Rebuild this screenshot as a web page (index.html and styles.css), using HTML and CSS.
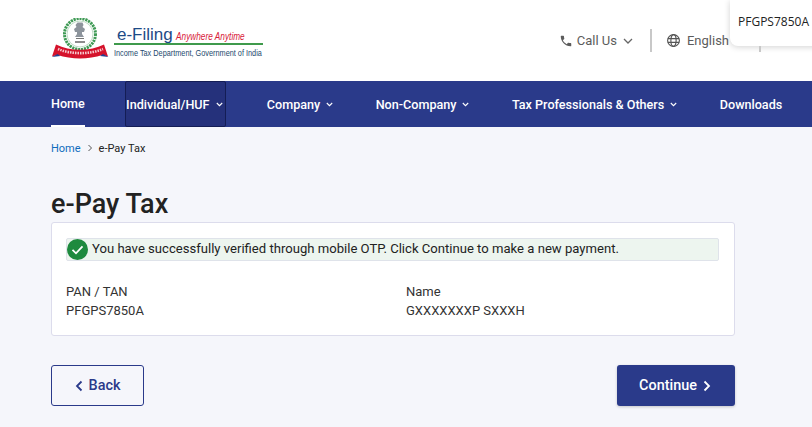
FILE: index.html
```html
<!DOCTYPE html>
<html lang="en">
<head>
  <meta charset="UTF-8">
  <title>e-Pay Tax</title>
  <link rel="stylesheet" href="styles.css">
</head>
<body>

  <!-- HEADER -->
  <header class="header">
    <div class="logo">
      <svg class="logo__emblem" width="60" height="42" viewBox="0 0 60 42">
        <circle cx="29" cy="16" r="15.500" fill="none" stroke="#3f9a55" stroke-width="3" stroke-dasharray="2.200 .8"/>
        <circle cx="29" cy="16" r="13" fill="none" stroke="#bfdcc6" stroke-width="1"/>
        <path d="M26.500 4.500h5l1 2.500-1 2 2.500 2-1 3h-2v2l2 3h-9l2-3v-2h-2l-1-3 2.500-2-1-2z" fill="#8d949c"/>
        <path d="M24 24h10" stroke="#666" stroke-width="1.500"/>
        <path d="M25 20.500h8" stroke="#777" stroke-width="1"/>
        <path d="M5 26.500c14 7 34 7 48 0l4 12-5.500-1.500c-14 4.500-31 4.500-45 0L1 38.500z" fill="#d5122b"/>
        <path d="M7 31c13 5.500 32 5.500 45 0" fill="none" stroke="#f6c9cf" stroke-width="2.600" stroke-dasharray="1.500 1"/>
        <path d="M1 39l5.500-3 3 2zM57.500 39l-5.500-3-3 2z" fill="#23408f"/>
      </svg>
      <div class="logo__text">
        <div class="logo__top"><span class="logo__name">e-Filing</span><span class="logo__tag">Anywhere Anytime</span></div>
        <div class="logo__dept"><span class="logo__dept-text">Income Tax Department, Government of India</span></div>
      </div>
    </div>
    <div class="tools">
      <svg width="14" height="14" viewBox="0 0 24 24"><path d="M6.600 10.800c1.400 2.800 3.800 5.100 6.600 6.600l2.200-2.200c.3-.3.7-.4 1-.2 1.100.4 2.300.6 3.600.6.600 0 1 .4 1 1V20c0 .6-.4 1-1 1C10.600 21 3 13.400 3 4c0-.6.4-1 1-1h3.500c.6 0 1 .4 1 1 0 1.300.2 2.500.6 3.600.1.300 0 .7-.2 1z" fill="#5c5c5c"/></svg>
      <span class="tools__label tools__label--call">Call Us</span>
      <svg class="tools__chev" width="10" height="6" viewBox="0 0 10 6"><path d="M1 1l4 4 4-4" fill="none" stroke="#666" stroke-width="1.300"/></svg>
      <span class="tools__sep"></span>
      <svg width="15" height="15" viewBox="0 0 16 16" fill="none" stroke="#555" stroke-width="1.200"><circle cx="8" cy="8" r="6.300"/><ellipse cx="8" cy="8" rx="2.800" ry="6.300"/><path d="M2 6h12M2 10h12"/></svg>
      <span class="tools__label">English</span>
    </div>
    <div class="pan-pop">PFGPS7850A</div>
    <span class="pan-tick"></span>
  </header>

  <!-- MENU -->
  <nav class="nav">
    <a class="nav__item nav__item--active">Home</a>
    <a class="nav__item nav__item--focus">Individual/HUF<svg class="nav__chev" width="7" height="5" viewBox="0 0 7 5"><path d="M.8 1l2.700 2.700L6.200 1" fill="none" stroke="#fff" stroke-width="1.100"/></svg></a>
    <a class="nav__item">Company<svg class="nav__chev" width="7" height="5" viewBox="0 0 7 5"><path d="M.8 1l2.700 2.700L6.200 1" fill="none" stroke="#fff" stroke-width="1.100"/></svg></a>
    <a class="nav__item">Non-Company<svg class="nav__chev" width="7" height="5" viewBox="0 0 7 5"><path d="M.8 1l2.700 2.700L6.200 1" fill="none" stroke="#fff" stroke-width="1.100"/></svg></a>
    <a class="nav__item">Tax Professionals &amp; Others<svg class="nav__chev" width="7" height="5" viewBox="0 0 7 5"><path d="M.8 1l2.700 2.700L6.200 1" fill="none" stroke="#fff" stroke-width="1.100"/></svg></a>
    <a class="nav__item">Downloads</a>
  </nav>

  <!-- CONTENU -->
  <main class="main">
    <div class="crumbs">
      <a class="crumbs__link">Home</a>
      <svg width="6" height="8" viewBox="0 0 6 8"><path d="M1.500 1l3 3-3 3" fill="none" stroke="#555" stroke-width="1"/></svg>
      <span>e-Pay Tax</span>
    </div>

    <h1 class="title">e-Pay Tax</h1>

    <section class="card">
      <div class="alert">
        <svg class="alert__icon" width="21" height="21" viewBox="0 0 21 21"><circle cx="10.500" cy="10.500" r="10.500" fill="#1e8a3e"/><path d="M5.500 10.800l3.500 3.500 6.500-7" fill="none" stroke="#fff" stroke-width="1.800"/></svg>
        <span class="alert__text">You have successfully verified through mobile OTP. Click Continue to make a new payment.</span>
      </div>
      <div class="fields">
        <div class="field">
          <div>PAN / TAN</div>
          <div>PFGPS7850A</div>
        </div>
        <div class="field">
          <div>Name</div>
          <div>GXXXXXXXP SXXXH</div>
        </div>
      </div>
    </section>

    <div class="actions">
      <button class="btn btn--back"><svg width="8" height="12" viewBox="0 0 8 12"><path d="M6.500 1.500L2 6l4.500 4.500" fill="none" stroke="#2a3a8a" stroke-width="1.800"/></svg>Back</button>
      <button class="btn btn--next">Continue<svg width="8" height="12" viewBox="0 0 8 12"><path d="M1.500 1.500L6 6l-4.500 4.500" fill="none" stroke="#fff" stroke-width="1.800"/></svg></button>
    </div>
  </main>

</body>
</html>
```

FILE: styles.css
```css
html, body {
  margin: 0;
  padding: 0;
  height: 100%;
  overflow: hidden;
  font-family: Roboto, "Liberation Sans", sans-serif;
  background: #f5f6fb;
  color: #222;
}

/* === HEADER === */
.header {
  position: relative;
  display: flex;
  align-items: center;
  justify-content: space-between;
  height: 81px;
  padding: 0 52px 0 51px;
  box-sizing: border-box;
  background: #fff;
}

.logo {
  display: flex;
  align-items: flex-start;
  gap: 3px;
  margin-top: -3px;
}

.logo__top {
  display: flex;
  align-items: baseline;
  gap: 3px;
  padding-left: 3px;
  height: 25px;
  line-height: 33px;
}

.logo__name {
  font-family: "Liberation Sans", sans-serif;
  font-size: 17px;
  color: #1d4a86;
}

.logo__tag {
  font-family: "Liberation Sans", sans-serif;
  font-size: 11.500px;
  font-style: italic;
  color: #d8203a;
  transform: scaleX(0.72);
  transform-origin: left;
}

.logo__dept {
  width: 149px;
  border-top: 2px solid #3f9a4c;
  padding-top: 1px;
  font-family: "Liberation Sans", sans-serif;
  font-size: 9.500px;
  line-height: 13px;
  color: #1d4a6e;
  white-space: nowrap;
}

.logo__dept-text {
  display: inline-block;
  transform: scaleX(0.77);
  transform-origin: left;
}

.tools {
  display: flex;
  align-items: center;
  margin-right: 31px;
  color: #5c5c5c;
  font-size: 13px;
}

.tools__label {
  margin-left: 6px;
}

.tools__label--call {
  margin-left: 4px;
}

.tools__chev {
  margin-left: 6px;
}

.tools__sep {
  width: 2px;
  height: 23px;
  margin: 0 14px 0 17px;
  background: #c8c8c8;
}

.pan-pop {
  position: absolute;
  top: 0;
  left: 730px;
  width: 90px;
  height: 46px;
  padding: 14px 0 0 8px;
  box-sizing: border-box;
  border-radius: 0 0 0 8px;
  background: #fff;
  box-shadow: 0 1px 6px rgba(0, 0, 0, 0.18);
  font-family: "Open Sans", sans-serif;
  font-size: 12px;
  line-height: 16px;
  color: #222;
}

.pan-tick {
  position: absolute;
  top: 46px;
  left: 759px;
  width: 2px;
  height: 6px;
  background: #c8c8c8;
}

/* === MENU === */
.nav {
  display: flex;
  align-items: stretch;
  gap: 42.500px;
  height: 46px;
  padding-left: 51px;
  background: #2a3a8a;
}

.nav__item {
  display: flex;
  align-items: center;
  box-sizing: border-box;
  color: #fff;
  font-size: 12.600px;
  font-weight: 500;
  white-space: nowrap;
}

.nav__item--active {
  border-bottom: 2px solid #fff;
}

.nav__item--focus {
  width: 101px;
  margin: 0 -1.500px 0 -2.500px;
  padding-right: 2px;
  justify-content: center;
  background: #25317b;
  border: 1px solid #141d55;
  border-radius: 2px;
}

.nav__chev {
  margin-left: 6px;
}

/* === CONTENU === */
.main {
  padding: 0 77px 0 51px;
}

.crumbs {
  display: flex;
  align-items: center;
  gap: 6px;
  height: 14px;
  margin-top: 14px;
  font-size: 11px;
  color: #222;
}

.crumbs__link {
  color: #0f6cbd;
}

.title {
  margin: 33px 0 0;
  font-size: 27px;
  font-weight: 500;
  line-height: 33px;
  color: #222;
}

.card {
  height: 114px;
  margin-top: 1px;
  padding: 15px 15px 0 14px;
  box-sizing: border-box;
  border: 1px solid #dcdcec;
  border-radius: 3px;
  background: #fff;
}

.alert {
  display: flex;
  align-items: center;
  gap: 4px;
  height: 23px;
  box-sizing: border-box;
  border: 1px solid #dfe3ea;
  border-radius: 2px;
  background: #edf5ef;
  font-size: 13.100px;
  color: #222;
}

.alert__icon {
  flex: none;
}

.alert__text {
  margin-top: -2px;
}

.fields {
  display: grid;
  grid-template-columns: 340px 1fr;
  margin-top: 21px;
  font-size: 13px;
  line-height: 19px;
  color: #333;
}

.actions {
  display: flex;
  justify-content: space-between;
  margin-top: 29px;
}

.btn {
  display: flex;
  align-items: center;
  justify-content: center;
  gap: 6px;
  height: 41px;
  padding: 0 6px;
  box-sizing: border-box;
  border-radius: 3px;
  font-family: inherit;
  font-size: 14.400px;
  font-weight: 500;
  cursor: pointer;
}

.btn--back {
  width: 93px;
  border: 1px solid #2a3a8a;
  background: transparent;
  color: #2a3a8a;
}

.btn--next {
  width: 118px;
  padding-right: 8px;
  border: 0;
  background: #2a3a8a;
  color: #fff;
  box-shadow: 0 1px 3px rgba(0, 0, 0, 0.2);
}
```
